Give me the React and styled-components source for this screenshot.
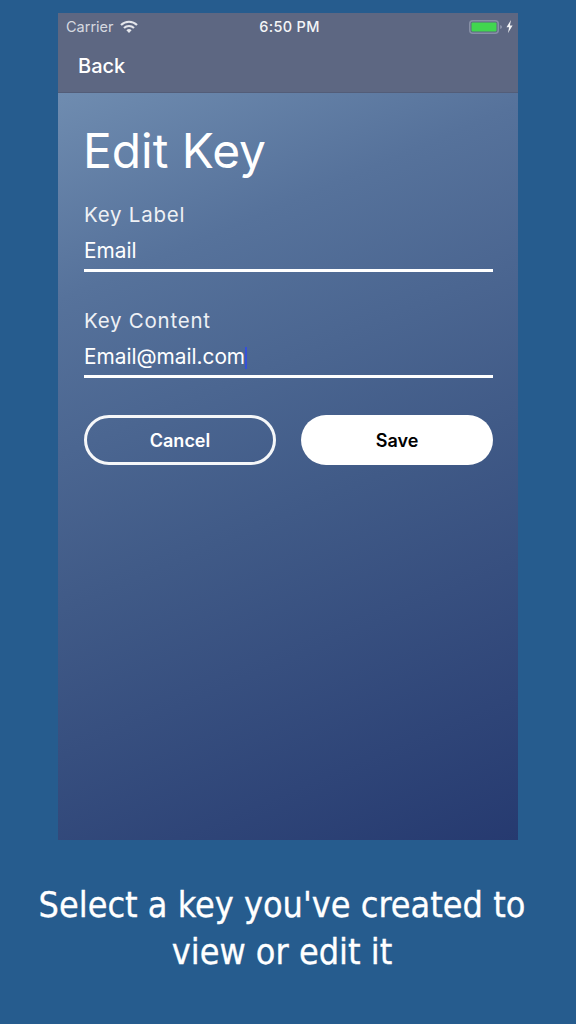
import React from "react";
import styled, { createGlobalStyle } from "styled-components";

const Global = createGlobalStyle`
html, body { margin: 0; padding: 0; background: #265c8e; }
`;

const Page = styled.div`
width: 576px;
height: 1024px;
padding-top: 13px;
box-sizing: border-box;
background: #265c8e;
display: flex;
flex-direction: column;
align-items: center;
overflow: hidden;
`;

const Phone = styled.div`
width: 460px;
height: 827px;
flex: none;
display: flex;
flex-direction: column;
font-family: Inter, "Liberation Sans", sans-serif;
color: #fff;
`;

const TopBar = styled.div`
height: 80px;
flex: none;
box-sizing: border-box;
background: #5d6782;
border-bottom: 1px solid #535d78;
`;

const StatusBar = styled.div`
height: 27px;
padding: 0 5px 0 8px;
display: grid;
grid-template-columns: 1fr auto 1fr;
align-items: center;
font-size: 14.5px;
`;

const Carrier = styled.div`
display: flex;
align-items: center;
gap: 6px;
color: #d6d9e0;
font-size: 14.5px;
`;

const Clock = styled.div`
font-weight: 500;
letter-spacing: 0.3px;
color: #f4f5f7;
`;

const Power = styled.div`
display: flex;
justify-content: flex-end;
align-items: center;
gap: 4px;
`;

const BackLink = styled.div`
padding: 14px 0 0 20px;
font-size: 20px;
font-weight: 500;
line-height: 24px;
`;

const Content = styled.div`
flex: 1;
padding: 29px 25px 0 26px;
background: linear-gradient(157deg, #6f8cb0 0%, #56729b 22%, #405a87 55%, #263a70 100%);
`;

const Title = styled.h1`
margin: 0 0 22px -1px;
font-size: 47.9px;
font-weight: 400;
line-height: 58px;
`;

const Field = styled.div`
margin-bottom: 36px;
`;

const Label = styled.div`
font-size: 20.5px;
line-height: 26px;
letter-spacing: 0.75px;
color: #eef1f5;
`;

const Value = styled.div`
height: 44px;
box-sizing: border-box;
padding-top: 10px;
border-bottom: 3px solid #fff;
font-size: 20.8px;
line-height: 26px;
display: flex;
`;

const Caret = styled.span`
display: block;
flex: none;
width: 2px;
height: 22px;
margin-top: 3px;
background: #3550d8;
`;

const Actions = styled.div`
display: flex;
justify-content: space-between;
margin-top: 37px;
`;

const Button = styled.div`
width: 192px;
height: 50px;
box-sizing: border-box;
border-radius: 25px;
border: 3px solid rgba(255, 255, 255, 0.95);
background: ${(p) => (p.$solid ? "#fff" : "transparent")};
color: ${(p) => (p.$solid ? "#000" : "#fff")};
display: flex;
align-items: center;
justify-content: center;
font-size: 18px;
font-weight: 600;
`;

const Caption = styled.p`
margin: 41px 0 0;
width: 576px;
box-sizing: border-box;
padding-right: 12px;
text-align: center;
font-family: "DejaVu Sans Condensed", "DejaVu Sans", sans-serif;
font-stretch: condensed;
font-size: 35.7px;
line-height: 47px;
color: #fff;
-webkit-text-stroke: 0.3px #fff;
`;

function Wifi() {
    return (
        <svg width="18" height="13" viewBox="0 0 18 13">
            <path d="M1 5a11.5 11.5 0 0 1 16 0" fill="none" stroke="#e4e6eb" strokeWidth="2.2" />
            <path d="M4 8a7.2 7.2 0 0 1 10 0" fill="none" stroke="#e4e6eb" strokeWidth="2.2" />
            <path d="M9 13l-2.6-2.8a3.8 3.8 0 0 1 5.2 0z" fill="#e4e6eb" />
        </svg>
    );
}

function Battery() {
    return (
        <svg width="33" height="14" viewBox="0 0 33 14">
            <rect x="0.75" y="0.75" width="28.5" height="12.5" rx="3" fill="none" stroke="#878fa6" strokeWidth="1.5" />
            <rect x="2.5" y="2.5" width="25" height="9" rx="1" fill="#41d64f" />
            <path d="M31 5l2 1v2l-2 1z" fill="#878fa6" />
        </svg>
    );
}

function Bolt() {
    return (
        <svg width="7" height="13" viewBox="0 0 7 13">
            <path d="M5 0L0.5 7.3h2.6L2 13l4.6-7.6H3.9z" fill="#f4f5f7" />
        </svg>
    );
}

export default function App() {
    return (
        <Page>
            <Global />
            <Phone>
                <TopBar>
                    <StatusBar>
                        <Carrier>Carrier <Wifi /></Carrier>
                        <Clock>6:50 PM</Clock>
                        <Power><Battery /><Bolt /></Power>
                    </StatusBar>
                    <BackLink>Back</BackLink>
                </TopBar>
                <Content>
                    <Title>Edit Key</Title>
                    <Field>
                        <Label>Key Label</Label>
                        <Value>Email</Value>
                    </Field>
                    <Field>
                        <Label>Key Content</Label>
                        <Value>Email@mail.com<Caret /></Value>
                    </Field>
                    <Actions>
                        <Button>Cancel</Button>
                        <Button $solid>Save</Button>
                    </Actions>
                </Content>
            </Phone>
            <Caption>Select a key you've created to<br />view or edit it</Caption>
        </Page>
    );
}
